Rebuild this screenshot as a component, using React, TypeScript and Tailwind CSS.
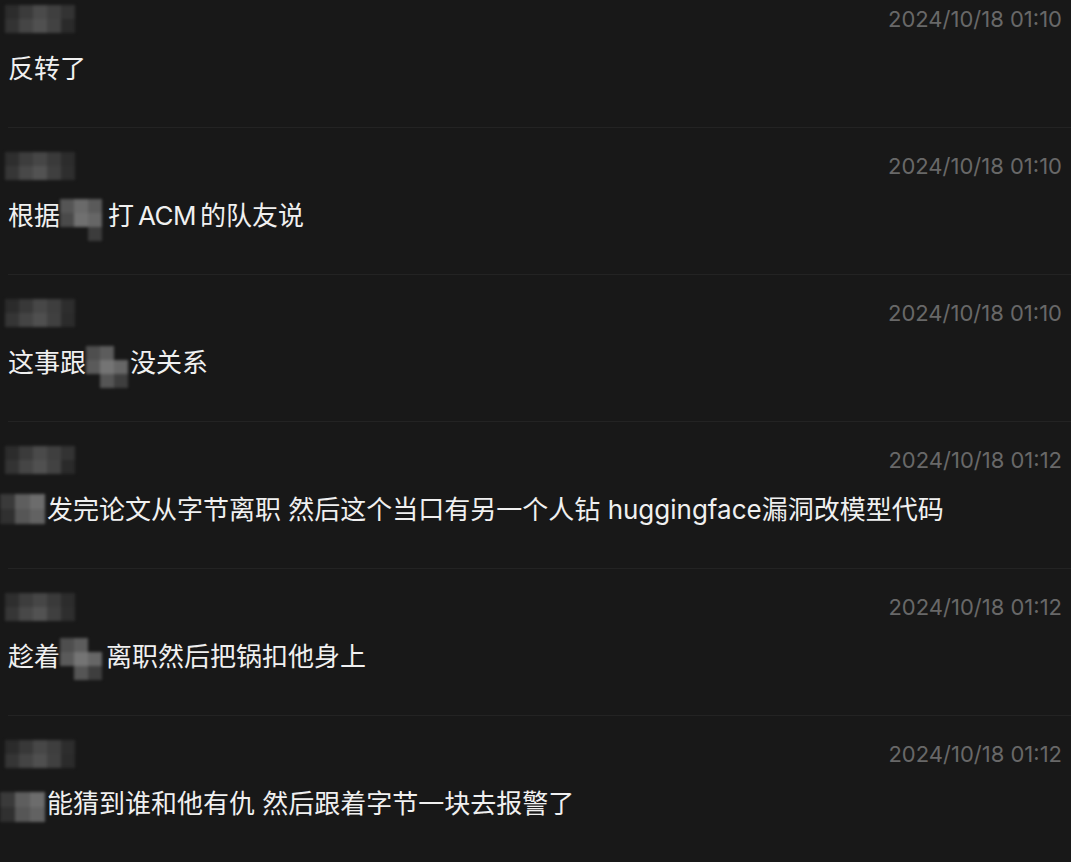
import React from 'react';

type Cells = string[][];

// mosaic used to hide names in the screenshot
const Mosaic = ({ cells, size = 14, className = '' }: { cells: Cells; size?: number; className?: string }) => (
  <span className={`inline-flex flex-col blur-[1.5px] ${className}`}>
    {cells.map((row, i) => (
      <span key={i} className="flex">
        {row.map((c, j) => (
          <span key={j} style={{ width: size, height: size, background: c || 'transparent' }} />
        ))}
      </span>
    ))}
  </span>
);

const nameCells: Cells[] = [
  [
    ['#2c2c2c', '#3b3b3b', '#4a4a4a', '#3f3f3f', '#333333'],
    ['#333333', '#454545', '#505050', '#424242', '#2a2a2a'],
  ],
  [
    ['#2e2e2e', '#3d3d3d', '#464646', '#3a3a3a', '#2c2c2c'],
    ['#363636', '#484848', '#525252', '#3f3f3f', '#2e2e2e'],
  ],
  [
    ['#2b2b2b', '#383838', '#474747', '#3e3e3e', '#2d2d2d'],
    ['#353535', '#444444', '#4f4f4f', '#404040', '#2b2b2b'],
  ],
];

interface Msg {
  time: string;
  content: React.ReactNode;
}

const inlineA: Cells = [
  ['#555555', '#6a6a6a', '#5a5a5a'],
  ['#4a4a4a', '#707070', '#666666'],
  ['', '', '#3c3c3c'],
];
const inlineB: Cells = [
  ['#4e4e4e', '#5c5c5c', ''],
  ['#5a5a5a', '#747474', '#666666'],
  ['', '#555555', '#3e3e3e'],
];
const leading: Cells = [
  ['#3a3a3a', '#5e5e5e', '#6c6c6c'],
  ['#303030', '#565656', '#626262'],
];

const messages: Msg[] = [
  { time: '2024/10/18 01:10', content: <>反转了</> },
  {
    time: '2024/10/18 01:10',
    content: (
      <>
        根据
        <Mosaic cells={inlineA} className="translate-y-[5px]" />
        <span className="ml-1.5">打</span>
        <span className="mx-[4px] tracking-[-0.5px]">ACM</span>
        的队友说
      </>
    ),
  },
  {
    time: '2024/10/18 01:10',
    content: (
      <>
        这事跟
        <Mosaic cells={inlineB} className="mr-0.5 translate-y-[5px]" />
        没关系
      </>
    ),
  },
  {
    time: '2024/10/18 01:12',
    content: (
      <>
        <Mosaic cells={leading} size={15} className="-ml-2 mr-0.5" />
        发完论文从字节离职 然后这个当口有另一个人钻 huggingface漏洞改模型代码
      </>
    ),
  },
  {
    time: '2024/10/18 01:12',
    content: (
      <>
        趁着
        <Mosaic cells={inlineB} className="mr-1 translate-y-[3px]" />
        离职然后把锅扣他身上
      </>
    ),
  },
  {
    time: '2024/10/18 01:12',
    content: (
      <>
        <Mosaic cells={leading} size={15} className="-ml-2 mr-0.5 translate-y-[4px]" />
        能猜到谁和他有仇 然后跟着字节一块去报警了
      </>
    ),
  },
];

const Row = ({ msg, index, first }: { msg: Msg; index: number; first: boolean }) => (
  <div className={`ml-2 border-b border-[#232323] pb-[41px] ${first ? 'pt-[4px]' : 'pt-[23px]'}`}>
    <div className="flex h-[30px] items-center justify-between pr-[9px]">
      <Mosaic cells={nameCells[index % 3]} className="-ml-[3px]" />
      <span className="text-[22px] text-[#686868]">{msg.time}</span>
    </div>
    <div className="mt-4 flex h-9 items-center whitespace-pre text-[26px] text-[#f0f0f0]">{msg.content}</div>
  </div>
);

const App = () => {
  return (
    <div
      className="h-[862px] w-full overflow-hidden bg-[#181818]"
      style={{ fontFamily: 'Inter, "Noto Sans CJK SC", sans-serif' }}
    >
      {messages.map((m, i) => (
        <Row key={i} msg={m} index={i} first={i === 0} />
      ))}
    </div>
  );
};

export default App;
